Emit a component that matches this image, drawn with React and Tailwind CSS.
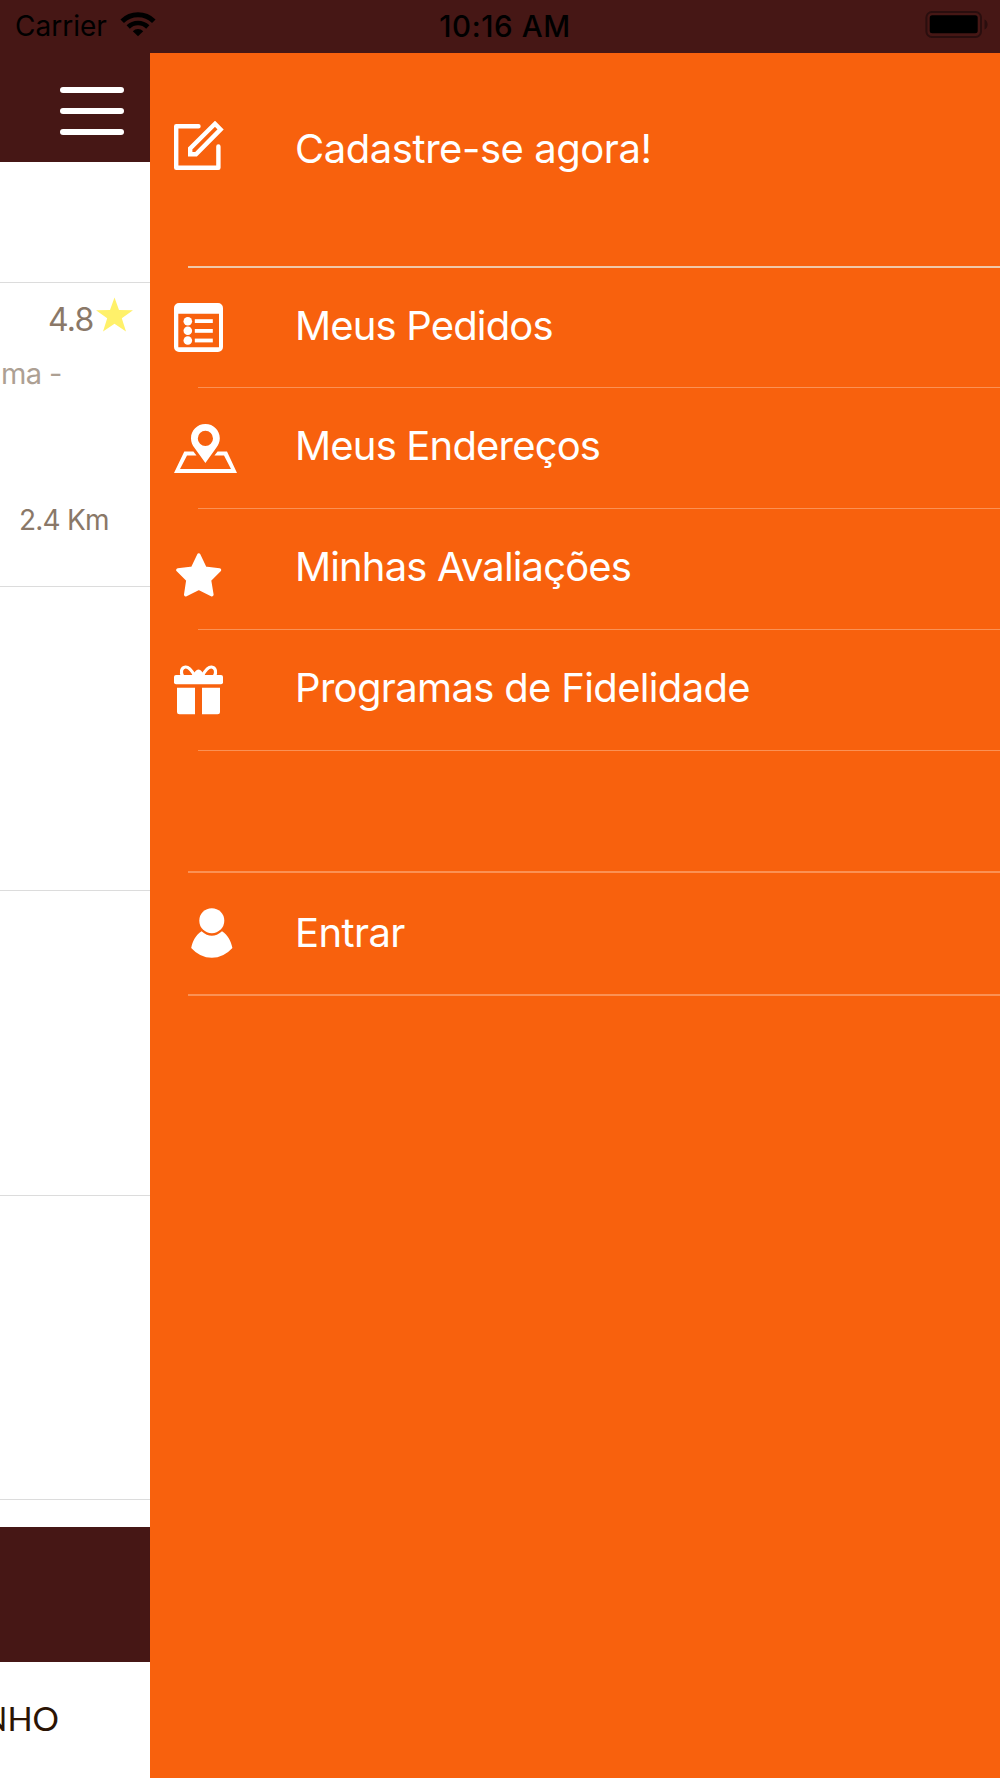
import React from 'react';

function WifiIcon() {
    return (
        <svg className="ml-[13px] mt-[12px] w-[36px] h-[25px]" viewBox="0 0 36 25" fill="none" stroke="#000">
            <path d="M2.2 9.2 A22.5 22.5 0 0 1 33.8 9.2" strokeWidth="5" />
            <path d="M8.2 15 A14 14 0 0 1 27.8 15" strokeWidth="4.6" />
            <path d="M18 24.2 L12.8 19.2 A7.4 7.4 0 0 1 23.2 19.2 Z" fill="#000" stroke="none" />
        </svg>
    );
}

function BatteryIcon() {
    return (
        <svg className="w-[64px] h-[27px]" viewBox="0 0 64 27">
            <rect x="1.4" y="1" width="54.6" height="25" rx="5.5" fill="none" stroke="#2a0e0e" strokeWidth="2" />
            <rect x="4.7" y="4.3" width="48" height="18" rx="2.5" fill="#000" />
            <path d="M59.5 8.5 C63.6 10.2 63.6 16.8 59.5 18.5 Z" fill="#2a0e0e" />
        </svg>
    );
}

function EditIcon() {
    return (
        <svg className="w-[50px] h-[50px]" viewBox="0 0 50 50" fill="none" stroke="#fff" strokeWidth="4.4" strokeLinecap="round" strokeLinejoin="round">
            <path d="M24.5 5.2 H2.2 V46.8 H44.4 V25.4" />
            <path d="M16.2 33.2 V27.4 L41 2.8 L46.6 8.4 L22 33.2 Z" strokeLinejoin="miter" />
        </svg>
    );
}

function OrdersIcon() {
    return (
        <svg className="w-[49px] h-[49px]" viewBox="0 0 49 49">
            <path fill="#fff" fillRule="evenodd" d="M5 0 H44 A5 5 0 0 1 49 5 V44 A5 5 0 0 1 44 49 H5 A5 5 0 0 1 0 44 V5 A5 5 0 0 1 5 0 Z M4.3 10.8 V44.2 H45 V10.8 Z" />
            <g fill="#fff">
                <circle cx="13.8" cy="18.2" r="4.3" />
                <circle cx="13.8" cy="27.8" r="4.3" />
                <circle cx="13.8" cy="37.5" r="4.3" />
                <rect x="20.8" y="16.2" width="18" height="3.8" />
                <rect x="20.8" y="26" width="18" height="3.8" />
                <rect x="20.8" y="35.6" width="18" height="3.8" />
            </g>
        </svg>
    );
}

function AddressIcon() {
    return (
        <svg className="w-[63px] h-[49px]" viewBox="0 0 63 49" fill="#fff">
            <path fillRule="evenodd" d="M31.4 0 C39.5 0 45.8 6.4 45.8 14.2 C45.8 18 44.2 21.2 42.3 23.8 L31.4 39 L20.4 23.8 C18.4 21 17 18 17 14.2 C17 6.4 23.2 0 31.4 0 Z M31.4 6.8 A7.6 7.6 0 1 0 31.4 22 A7.6 7.6 0 1 0 31.4 6.8 Z" />
            <path d="M10.3 27.4 H19.4 L22.5 31.4 H13 L6 45 H57 L50 31.4 H40.4 L43.6 27.4 H53 L63 49 H0 Z" />
        </svg>
    );
}

function RateIcon() {
    return (
        <svg className="w-[46px] h-[44px]" viewBox="0 0 46 44" fill="#fff" stroke="#fff" strokeWidth="3.6" strokeLinejoin="round">
            <path d="M22.8 2.2 L29 15.2 L43.4 17 L33.4 27 L35.8 41.6 L22.8 35.2 L9.8 41.6 L12 27 L2 17 L16.6 15.2 Z" />
        </svg>
    );
}

function GiftIcon() {
    return (
        <svg className="w-[49px] h-[50px]" viewBox="0 0 49 50" fill="#fff">
            <path d="M20.5 10.5 C17.5 5 14.6 1.8 11.5 2 C7.4 2.4 6 7.5 9 11.8 M28.5 10.5 C31.5 5 34.4 1.8 37.5 2 C41.6 2.4 43 7.5 40 11.8" fill="none" stroke="#fff" strokeWidth="3.2" />
            <path d="M17.5 11 C20 7.5 21.5 6.2 22.5 5.2 Q24.5 3.6 26.5 5.2 C27.5 6.2 29 7.5 31.5 11 Z" />
            <rect x="0" y="10" width="49" height="9.2" rx="2" />
            <path d="M3 22.7 H21 V49.2 H5.5 A2.5 2.5 0 0 1 3 46.7 Z" />
            <path d="M28 22.7 H46 V46.7 A2.5 2.5 0 0 1 43.5 49.2 H28 Z" />
        </svg>
    );
}

function UserIcon() {
    return (
        <svg className="w-[42px] h-[50px]" viewBox="0 0 42 50" fill="#fff">
            <circle cx="20.8" cy="12.7" r="12.5" />
            <path d="M10.6 23.2 Q20.8 32.4 31 23.2 C37 27.2 40 33 41.4 40 Q32.5 49.8 20.8 49.8 Q9 49.8 0.2 40 C1.6 33 4.6 27.2 10.6 23.2 Z" />
        </svg>
    );
}

const menuItems = [
    { label: 'Meus Pedidos', icon: <OrdersIcon />, row: 'h-[119px]', iconPad: 'pt-[35px]', tracking: 'tracking-[-0.85px]' },
    { label: 'Meus Endereços', icon: <AddressIcon />, row: 'h-[120px]', iconPad: 'pt-[36px]', tracking: 'tracking-[-0.82px]' },
    { label: 'Minhas Avaliações', icon: <RateIcon />, row: 'h-[120px]', iconPad: 'pt-[44px] pl-[2px]', tracking: 'tracking-[-0.86px]' },
    { label: 'Programas de Fidelidade', icon: <GiftIcon />, row: 'h-[120px]', iconPad: 'pt-[35px]', tracking: 'tracking-[-0.66px]' },
];

function StatusBar() {
    return (
        <div className="grid grid-cols-3 h-[53px] bg-[#461715] text-black">
            <div className="flex">
                <span className="pl-[15px] pt-[8px] text-[28px] leading-[36px]">Carrier</span>
                <WifiIcon />
            </div>
            <div className="pt-[8px] pl-[10px] text-center text-[29.5px] leading-[36px] font-medium tracking-[0.6px] whitespace-nowrap">10:16 AM</div>
            <div className="flex justify-end pr-[11px] pt-[11px]">
                <BatteryIcon />
            </div>
        </div>
    );
}

// メニューの後ろに見えている画面
function PageBehind() {
    return (
        <div className="flex flex-col w-[150px] shrink-0 overflow-hidden bg-white text-[#8a7868]">
            <div className="h-[109px] shrink-0 bg-[#461715] pt-[34px] pl-[60px]">
                <div className="flex flex-col gap-[15px] w-[64px]">
                    <div className="h-[6px] rounded-full bg-white" />
                    <div className="h-[6px] rounded-full bg-white" />
                    <div className="h-[6px] rounded-full bg-white" />
                </div>
            </div>
            <div className="h-[121px] shrink-0 border-b border-[#dcdcdc]" />
            <div className="h-[304px] shrink-0 border-b border-[#dcdcdc]">
                <div className="flex h-[72px] pt-[14px] pl-[48px]">
                    <span className="w-[48px] pt-[3px] text-[32px] leading-[40px] tracking-[-0.8px]">4.8</span>
                    <svg className="w-[37px] h-[35px]" viewBox="0 0 37 35" fill="#fff16a">
                        <path d="M18.5 0.5 L23 13 L37 13.3 L25.8 21.3 L30 34.6 L18.5 26.8 L7 34.6 L11.2 21.3 L0 13.3 L14 13 Z" />
                    </svg>
                </div>
                <p className="pt-px pl-[1px] text-[29px] leading-[36px] tracking-[-0.6px] text-[#ada093]">ma -</p>
                <p className="pt-[110px] pl-[19px] text-[28px] leading-[36px] tracking-[-0.8px]">2.4 Km</p>
            </div>
            <div className="h-[304px] shrink-0 border-b border-[#dcdcdc]" />
            <div className="h-[305px] shrink-0 border-b border-[#dcdcdc]" />
            <div className="h-[304px] shrink-0 border-b border-[#dcdcdc]" />
            <div className="h-[27px] shrink-0" />
            <div className="h-[135px] shrink-0 bg-[#461715]" />
            <p className="w-[59px] flex justify-end pt-[36px] font-['Lato',sans-serif] text-[33px] leading-[40px] text-[#2b1404]">NHO</p>
        </div>
    );
}

function Drawer() {
    return (
        <div className="flex-1 bg-[#f8610d] text-white text-[40px] leading-[48px] whitespace-nowrap">
            <div className="flex h-[213px] pl-[24px]">
                <div className="w-[121px] pt-[68px]"><EditIcon /></div>
                <p className="pt-[72px] tracking-[-0.45px]">Cadastre-se agora!</p>
            </div>
            <div className="ml-[38px] h-[2px] bg-[#f0c8a8]" />

            {menuItems.map((item) => (
                <div key={item.label}>
                    <div className={`flex pl-[24px] ${item.row}`}>
                        <div className={`w-[121px] ${item.iconPad}`}>{item.icon}</div>
                        <p className={`pt-[34px] ${item.tracking}`}>{item.label}</p>
                    </div>
                    <div className="ml-[48px] h-px bg-[#fb9154]" />
                </div>
            ))}

            <div className="h-[120px]" />
            <div className="ml-[38px] h-[2px] bg-[#fb9154]" />
            <div className="flex h-[121px] pl-[41px]">
                <div className="w-[104px] pt-[35px]"><UserIcon /></div>
                <p className="pt-[36px] tracking-[-0.6px]">Entrar</p>
            </div>
            <div className="ml-[38px] h-[2px] bg-[#fb9154]" />
        </div>
    );
}

export default function App() {
    return (
        <div className="w-[1000px] h-[1778px] overflow-hidden flex flex-col font-['Inter',sans-serif]">
            <StatusBar />
            <div className="flex flex-1">
                <PageBehind />
                <Drawer />
            </div>
        </div>
    );
}
